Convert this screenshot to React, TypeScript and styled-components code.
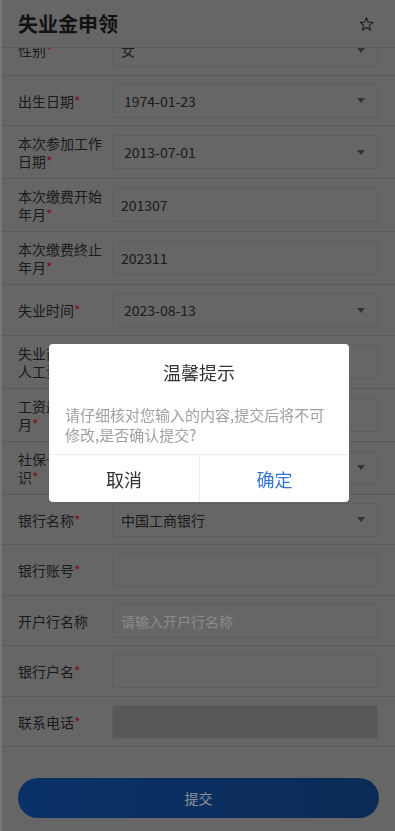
import React from "react";
import styled, { createGlobalStyle } from "styled-components";

const GlobalStyle = createGlobalStyle`
  html, body {
    margin: 0;
    padding: 0;
    background: #c6c6c6;
    font-family: "Noto Sans CJK SC", "Noto Sans", sans-serif;
  }
  * { box-sizing: border-box; }
`;

const Page = styled.div`
  margin-left: 2px;
  height: 831px;
  background: #aaaaaa;
  display: flex;
  flex-direction: column;
  overflow: hidden;
`;

const Header = styled.header`
  flex-shrink: 0;
  height: 48px;
  display: flex;
  align-items: center;
  justify-content: space-between;
  padding: 0 21px 0 16px;
  border-bottom: 1px solid #979797;
  background: #aaaaaa;
  position: relative;
  z-index: 1;
`;

const Title = styled.h1`
  margin: 0;
  font-size: 20px;
  font-weight: 700;
  color: #1e1e1e;
  line-height: 28px;
`;

const Scroller = styled.div`
  flex: 1;
  overflow: hidden;
`;

const Form = styled.div`
  margin-top: -23px;
`;

const Row = styled.div<{ $double?: boolean }>`
  display: flex;
  align-items: center;
  padding: ${(p) => (p.$double ? "8px 17px 8px 16px" : "8px 17px 7.5px 16px")};
  border-bottom: 1px solid #969696;
`;

const Label = styled.div`
  width: 86px;
  margin-right: 8px;
  flex-shrink: 0;
  font-size: 14px;
  line-height: 18px;
  color: #2e2e2e;
`;

const Star = styled.span`
  color: #d42222;
`;

const Field = styled.div<{ $pad?: number; $disabled?: boolean }>`
  flex: 1;
  height: 34px;
  border: 1px solid #9d9d9d;
  border-radius: 2px;
  background: ${(p) => (p.$disabled ? "#939393" : "transparent")};
  display: flex;
  align-items: center;
  justify-content: space-between;
  padding: 0 12px 0 ${(p) => p.$pad ?? 8}px;
  font-size: 14px;
  color: #2e2e2e;
`;

const Placeholder = styled.span`
  color: #e6e6e6;
`;

const Arrow = styled.span`
  width: 0;
  height: 0;
  border-left: 4px solid transparent;
  border-right: 4px solid transparent;
  border-top: 5px solid #555555;
`;

const Footer = styled.div`
  padding: 31px 16px 13px 16px;
`;

const SubmitButton = styled.button`
  width: 100%;
  height: 40px;
  border: none;
  border-radius: 20px;
  background: linear-gradient(90deg, #1152ad 0%, #134890 100%);
  color: #e6eefc;
  font-family: "Noto Sans CJK SC", "Noto Sans", sans-serif;
  font-size: 14px;
`;

const Overlay = styled.div`
  position: fixed;
  inset: 0;
  z-index: 100;
  background: rgba(0, 0, 0, 0.4);
  display: flex;
  align-items: center;
  justify-content: center;
  padding: 15px 0 0 3px;
`;

const Dialog = styled.div`
  width: 300px;
  background: #ffffff;
  border-radius: 4px;
  overflow: hidden;
`;

const DialogTitle = styled.div`
  padding-top: 16px;
  font-size: 18px;
  line-height: 24px;
  text-align: center;
  color: #333333;
`;

const DialogMessage = styled.div`
  margin: 21px 16px 9px;
  font-size: 15px;
  line-height: 20px;
  color: #a0a0a0;
`;

const DialogActions = styled.div`
  display: grid;
  grid-template-columns: 1fr 1fr;
  border-top: 1px solid #ececec;
  height: 48px;
`;

const DialogButton = styled.button<{ $primary?: boolean }>`
  border: none;
  background: transparent;
  font-family: "Noto Sans CJK SC", "Noto Sans", sans-serif;
  font-size: 18px;
  color: ${(p) => (p.$primary ? "#3478d4" : "#333333")};
  & + & {
    border-left: 1px solid #ececec;
  }
`;

type Item = {
  label: string;
  required?: boolean;
  value?: string;
  placeholder?: string;
  select?: boolean;
  pad?: number;
  double?: boolean;
  disabled?: boolean;
};

const items: Item[] = [
  { label: "性别", required: true, value: "女", select: true },
  { label: "出生日期", required: true, value: "1974-01-23", select: true, pad: 11 },
  { label: "本次参加工作日期", required: true, value: "2013-07-01", select: true, pad: 11, double: true },
  { label: "本次缴费开始年月", required: true, value: "201307", double: true },
  { label: "本次缴费终止年月", required: true, value: "202311", double: true },
  { label: "失业时间", required: true, value: "2023-08-13", select: true, pad: 11 },
  { label: "失业前平均个人工资", required: true, value: "", double: true },
  { label: "工资最后发放月", required: true, value: "", double: true },
  { label: "社保卡激活标识", required: true, value: "", select: true, double: true },
  { label: "银行名称", required: true, value: "中国工商银行", select: true },
  { label: "银行账号", required: true, value: "" },
  { label: "开户行名称", placeholder: "请输入开户行名称" },
  { label: "银行户名", required: true, value: "" },
  { label: "联系电话", required: true, value: "", disabled: true },
];

function StarIcon() {
  return (
    <svg width="15" height="14" viewBox="0 0 24 23" fill="none">
      <polygon
        points="12,1.5 14.9,8.4 22.3,9 16.6,13.9 18.4,21.2 12,17.3 5.6,21.2 7.4,13.9 1.7,9 9.1,8.4"
        stroke="#2a2a2a"
        strokeWidth="1.7"
        strokeLinejoin="miter"
      />
    </svg>
  );
}

export default function App() {
  return (
    <>
      <GlobalStyle />
      <Page>
        <Header>
          <Title>失业金申领</Title>
          <StarIcon />
        </Header>
        <Scroller>
          <Form>
            {items.map((it) => (
              <Row key={it.label} $double={it.double}>
                <Label>
                  {it.label}
                  {it.required && <Star>*</Star>}
                </Label>
                <Field $pad={it.pad} $disabled={it.disabled}>
                  {it.placeholder ? (
                    <Placeholder>{it.placeholder}</Placeholder>
                  ) : (
                    <span>{it.value}</span>
                  )}
                  {it.select && <Arrow />}
                </Field>
              </Row>
            ))}
          </Form>
          <Footer>
            <SubmitButton>提交</SubmitButton>
          </Footer>
        </Scroller>
      </Page>
      <Overlay>
        <Dialog>
          <DialogTitle>温馨提示</DialogTitle>
          <DialogMessage>请仔细核对您输入的内容,提交后将不可修改,是否确认提交?</DialogMessage>
          <DialogActions>
            <DialogButton>取消</DialogButton>
            <DialogButton $primary>确定</DialogButton>
          </DialogActions>
        </Dialog>
      </Overlay>
    </>
  );
}
